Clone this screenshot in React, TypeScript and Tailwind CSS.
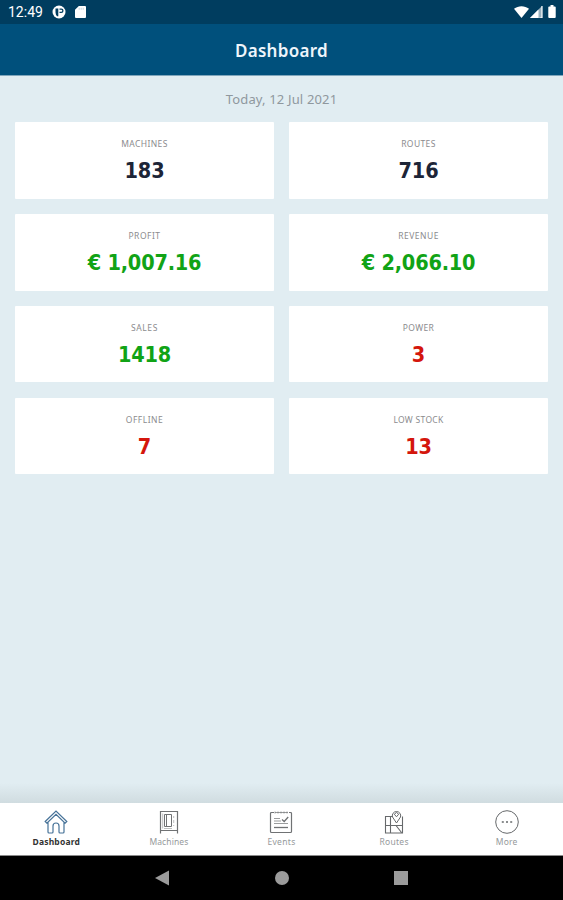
import type { ReactNode } from 'react'

interface Stat {
  label: string
  value: string
  color: string
  tracking: string
}

const stats: Stat[] = [
  { label: 'MACHINES', value: '183', color: 'text-[#1d2537]', tracking: 'tracking-[0.4px]' },
  { label: 'ROUTES', value: '716', color: 'text-[#1d2537]', tracking: 'tracking-[0.4px]' },
  { label: 'PROFIT', value: '€ 1,007.16', color: 'text-[#11a316]', tracking: 'tracking-[0.5px]' },
  { label: 'REVENUE', value: '€ 2,066.10', color: 'text-[#11a316]', tracking: 'tracking-[0.5px]' },
  { label: 'SALES', value: '1418', color: 'text-[#11a316]', tracking: 'tracking-[0.6px]' },
  { label: 'POWER', value: '3', color: 'text-[#d4160c]', tracking: 'tracking-[0.35px]' },
  { label: 'OFFLINE', value: '7', color: 'text-[#d4160c]', tracking: 'tracking-[0.5px]' },
  { label: 'LOW STOCK', value: '13', color: 'text-[#d4160c]', tracking: 'tracking-[0.3px]' },
]

const StatCard = ({ label, value, color, tracking }: Stat) => (
  <div className="bg-white rounded-[1px] flex flex-col items-center pt-[15px]">
    <div className={`text-[8.5px] leading-[14px] text-[#8b8b8e] whitespace-nowrap ${tracking}`}>{label}</div>
    <div
      className={`mt-[7px] text-[21.5px] leading-[26px] tracking-[-0.2px] font-bold whitespace-nowrap font-['DejaVu_Sans_Condensed','DejaVu_Sans',sans-serif] [font-stretch:condensed] ${color}`}
    >
      {value}
    </div>
  </div>
)

const StatusBar = () => (
  <div className="h-6 shrink-0 bg-[#003d5f] text-white flex items-center pl-[8px] pr-[7px]">
    <span className="font-[Roboto,sans-serif] text-[14px] leading-6 w-[44px]">12:49</span>
    <svg className="w-[14px] h-[14px]" viewBox="0 0 14 14">
      <circle cx="7" cy="7" r="6.5" fill="#fff" />
      <path d="M3.500 3.500h2.800v7.800H5C3.200 9.500 3.500 6 3.500 3.500z" fill="#003d5f" />
      <path d="M7.500 4.200h1.800a1.500 1.500 0 0 1 0 3.200H7.500" fill="none" stroke="#003d5f" strokeWidth="1.300" />
    </svg>
    <svg className="w-[11px] h-[12px] ml-[9px]" viewBox="0 0 11 12">
      <path d="M3.8 0H10a1 1 0 0 1 1 1v10a1 1 0 0 1-1 1H1a1 1 0 0 1-1-1V3.8z" fill="#fff" />
      <path d="M4.2 1.8v2M6.2 1.8v2M8.2 1.8v2" stroke="#b9cad5" strokeWidth=".8" />
    </svg>
    <div className="ml-auto flex items-center">
      <svg className="w-[15px] h-[12px]" viewBox="0 0 15 12">
        <path d="M7.5 12 0 2.8C4.4-.7 10.6-.7 15 2.8z" fill="#fff" />
      </svg>
      <svg className="w-[13px] h-[12px] ml-px" viewBox="0 0 13 12">
        <path d="M0 12 12 0v12z" fill="#fff" opacity=".6" />
        <path d="M0 12 8.5 3.5V12z" fill="#fff" />
        <path d="M12 0v12H9.5" fill="none" stroke="#fff" strokeWidth="1.2" />
      </svg>
      <svg className="w-[8px] h-[13px] ml-[5px] mb-px" viewBox="0 0 8 14">
        <path d="M2.4 0h3.2v1.5H7a1 1 0 0 1 1 1V13a1 1 0 0 1-1 1H1a1 1 0 0 1-1-1V2.500a1 1 0 0 1 1-1h1.400z" fill="#fff" />
      </svg>
    </div>
  </div>
)

const Icon = ({ children }: { children: ReactNode }) => (
  <svg className="w-6 h-6" viewBox="0 0 24 24" fill="none" stroke="currentColor" strokeWidth="1">
    {children}
  </svg>
)

const tabs = [
  {
    name: 'Dashboard',
    text: 'text-[#333] font-bold tracking-[0.2px]',
    iconColor: 'text-[#467298]',
    icon: (
      <Icon>
        <path d="M1.200 11.500 12 1l10.800 10.500-1.700 1.600L12 4.300l-9.100 8.800zM4 12.300V22a1 1 0 0 0 1 1h3a1 1 0 0 0 1-1v-6a3 3 0 0 1 6 0v6a1 1 0 0 0 1 1h3a1 1 0 0 0 1-1v-9.700" strokeWidth="1.200" />
      </Icon>
    ),
  },
  {
    name: 'Machines',
    text: 'text-[#96999b] tracking-[0.1px]',
    iconColor: 'text-[#707274]',
    icon: (
      <Icon>
        <path d="M3.500 23.500v-22h17v22M3.500 20.500h17" strokeWidth="1.200" />
        <path d="M7.500 4.500h7v12h-7zM9.500 4.500v12" />
        <path d="M5.700 3.500v15M16.700 6v2M16.700 10v3M16.700 15v1M7 18.500h8" strokeWidth=".7" opacity=".65" />
      </Icon>
    ),
  },
  {
    name: 'Events',
    text: 'text-[#96999b] tracking-[0.3px]',
    iconColor: 'text-[#707274]',
    icon: (
      <Icon>
        <path d="M5 2.500H2.500a1 1 0 0 0-1 1v18a1 1 0 0 0 1 1h19a1 1 0 0 0 1-1v-18a1 1 0 0 0-1-1H20" strokeWidth="1.200" />
        <path d="M6 1.500v2M9 1.500v2M12 1.500v2M15 1.500v2M18 1.500v2M6 2.500h13" strokeWidth=".7" />
        <path d="M5 8.500h6M5 11h7M5 13.500h14" strokeWidth=".7" />
        <path d="M5 17.500h14" strokeWidth="1.300" />
        <path d="m13 9.500 2.200 2 4-4.500" strokeWidth="1.300" />
      </Icon>
    ),
  },
  {
    name: 'Routes',
    text: 'text-[#96999b] tracking-[0.3px]',
    iconColor: 'text-[#66696b]',
    icon: (
      <Icon>
        <path d="M11 6.500H3.500v16.500h17v-16.500M3.500 15.500h17M8.500 6.500v16.500M14 15.500l5.500 7" strokeWidth="1.100" />
        <path d="M14.500 13 10.500 7a4.200 4.200 0 1 1 8 0z" fill="white" />
        <path d="m12.300 4.200 2.200-1.700 2.200 1.700-2.200 2.600z" />
      </Icon>
    ),
  },
  {
    name: 'More',
    text: 'text-[#96999b] tracking-[0.2px]',
    iconColor: 'text-[#66696b]',
    icon: (
      <Icon>
        <circle cx="12" cy="12" r="11.300" />
        <path d="M6.800 12h2M11 12h2M15.200 12h2" strokeWidth="1.300" />
      </Icon>
    ),
  },
]

const App = () => {
  return (
    <div className="w-[563px] h-[900px] flex flex-col bg-[#e1edf2] font-['Noto_Sans',sans-serif] overflow-hidden">
      <StatusBar />
      <header className="h-[52px] shrink-0 bg-[#00507c] border-b border-[#7fa6bc] flex items-center justify-center">
        <h1 className="mt-[3px] text-[17px] leading-6 font-semibold text-[#eef5fb] tracking-[0.3px]">Dashboard</h1>
      </header>

      <main className="flex-1">
        <p className="pt-[13px] h-[34px] text-center text-[13px] leading-5 text-[#8f989e] tracking-[0.15px]">Today, 12 Jul 2021</p>
        <div className="mt-3 px-[15px] grid grid-cols-2 gap-x-[15px] gap-y-[15.200px] auto-rows-[76.700px]">
          {stats.map((stat) => (
            <StatCard key={stat.label} {...stat} />
          ))}
        </div>
      </main>

      <div className="h-5 shrink-0 bg-linear-to-b from-[#e1edf2] to-[#d0dce0]" />
      <nav className="h-[53px] shrink-0 bg-white border-b border-[#8a8a8a] grid grid-cols-5">
        {tabs.map((tab) => (
          <div key={tab.name} className="flex flex-col items-center pt-[7px]">
            <span className={tab.iconColor}>{tab.icon}</span>
            <span className={`mt-[2px] text-[8.500px] leading-3 ${tab.text}`}>{tab.name}</span>
          </div>
        ))}
      </nav>

      <div className="h-11 shrink-0 bg-black text-[#9b9b9b] flex items-center justify-center">
        <svg className="w-[15px] h-4" viewBox="0 0 15 16">
          <path d="M0 8 14 .500v15z" fill="currentColor" />
        </svg>
        <span className="w-[14px] h-[14px] rounded-full bg-current mx-[105px]" />
        <span className="w-[14px] h-[14px] bg-current" />
      </div>
    </div>
  )
}

export default App
